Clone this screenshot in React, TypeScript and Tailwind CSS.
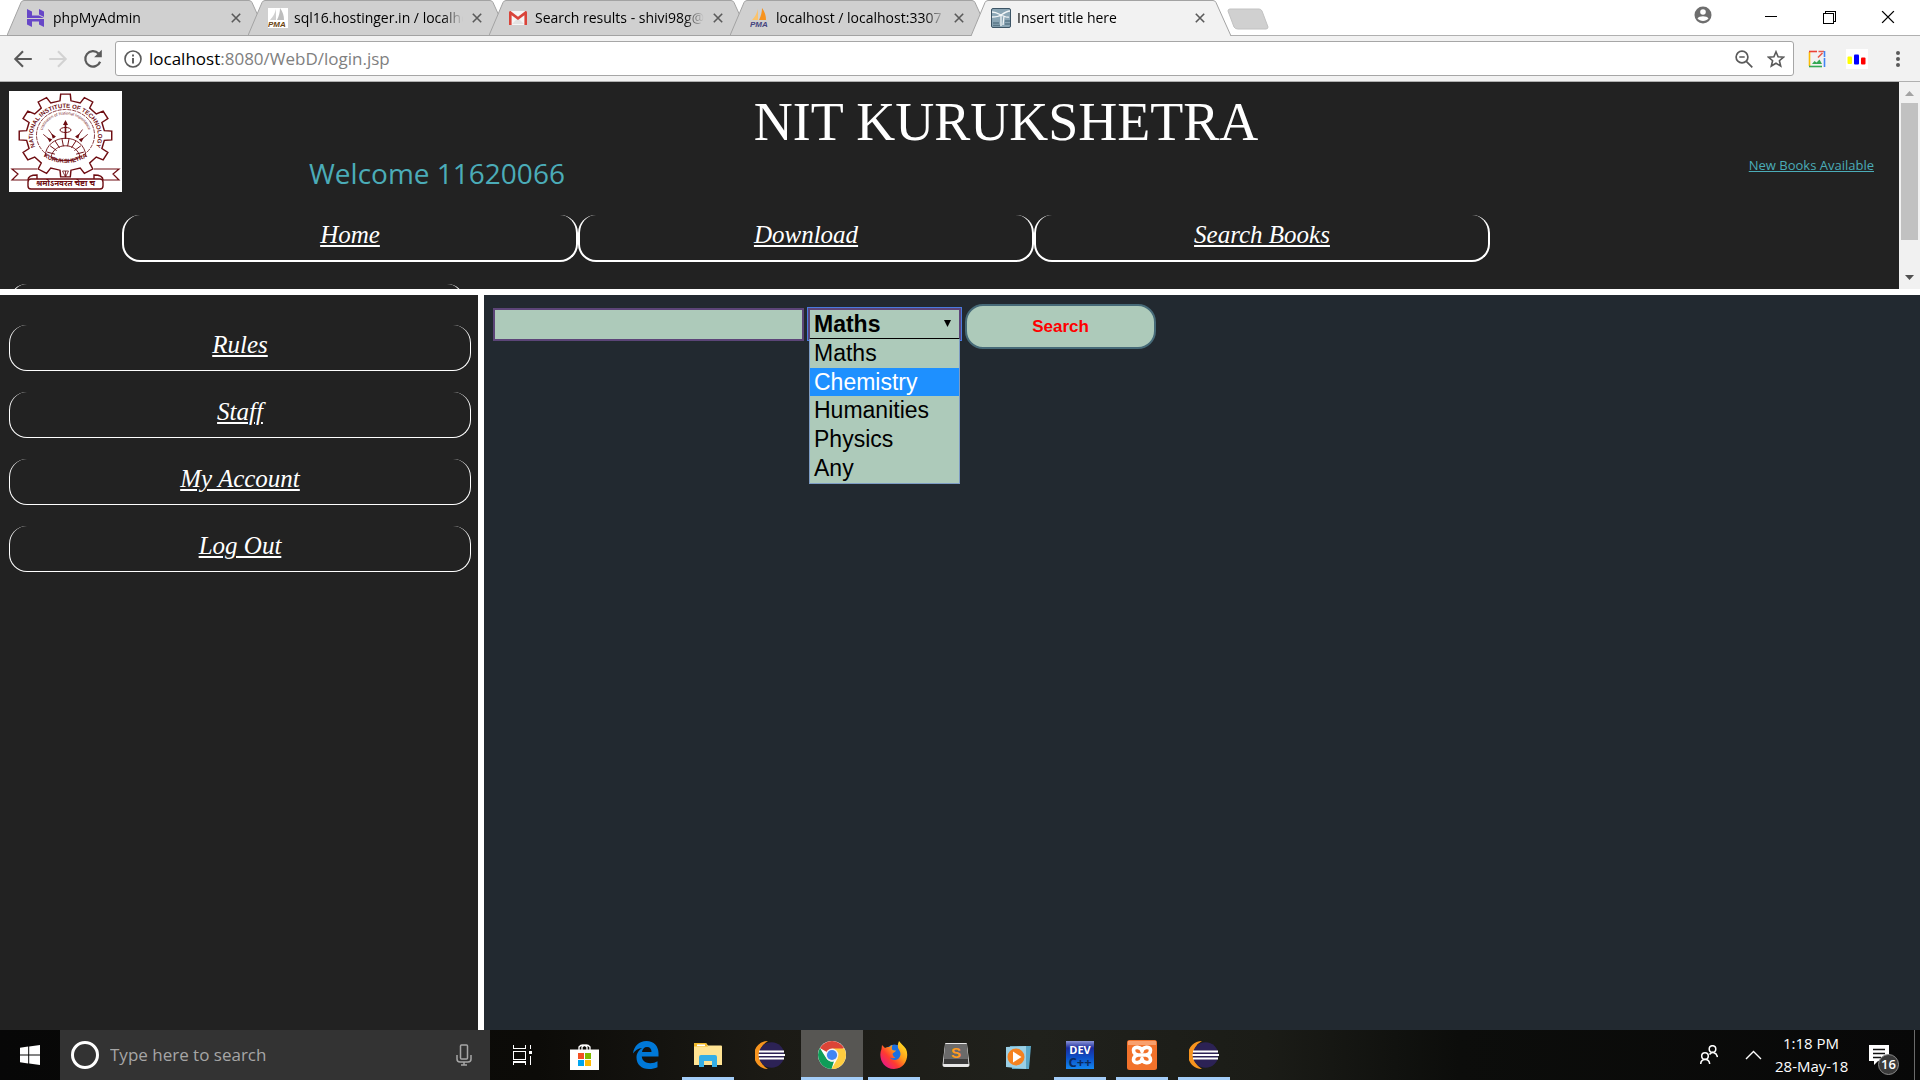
import type { ReactNode } from "react";

const UI = "font-[family-name:'Segoe_UI','Open_Sans',sans-serif]";
const COMIC = "font-[family-name:'Comic_Sans_MS','Open_Sans',sans-serif]";
const CORSIVA = "font-[family-name:'Monotype_Corsiva','Liberation_Serif',serif] italic";

/* ---------- browser chrome ---------- */

function HostingerIcon() {
  return (
    <svg viewBox="0 0 18 18" className="size-[18px]" fill="#6747c7">
      <path d="M0 0l5 2.600v3.800h7L17 9H0zM12 0l5 2.600V8l-5-2.400zM0 10h17v8l-5-2.600V12.600H5l0 0V18l-5-2.600z" />
    </svg>
  );
}

function PmaIcon({ gray }: { gray?: boolean }) {
  return (
    <svg viewBox="0 0 20 20" className="size-5">
      {gray && <rect width="20" height="20" fill="#fff" />}
      <path d="M8 1v11H2C5 9 7 5 8 1z" fill={gray ? "#d0d0d0" : "#fbc36b"} />
      <path d="M12 0c3 4 4 8 4 12H9c2-4 3-8 3-12z" fill={gray ? "#bdbdbd" : "#f7931e"} />
      <text x="0" y="19" fontSize="8" fontWeight="700" fontStyle="italic" fontFamily="Liberation Sans" fill={gray ? "#6b4510" : "#45457e"}>
        PMA
      </text>
    </svg>
  );
}

function GmailIcon() {
  return (
    <svg viewBox="0 0 18 14" className="h-3.5 w-[18px]">
      <path d="M2 0h14v14H2z" fill="#f5f5f5" />
      <path d="M3 13l6-6 6 6z" fill="#e2e2e2" />
      <path d="M0 1.500C0 .6.6 0 1.500 0L9 5.800 16.500 0c.9 0 1.500.6 1.500 1.500V14h-2.600V4.200L9 9 2.600 4.200V14H0z" fill="#d9443a" />
    </svg>
  );
}

function TomcatIcon() {
  return (
    <svg viewBox="0 0 20 20" className="size-5">
      <rect x=".5" y=".5" width="19" height="19" rx="1.500" fill="#8ba6b5" stroke="#3d5566" />
      <path d="M1 4c4 0 7 2 9 3 3-2 6-4 9-4M10 7c-3 2-6 2-9 2M10 7c3 1 6 3 8 2M10 7v11M13 8l-1 9" stroke="#f2f6f8" strokeWidth="1.300" fill="none" />
      <path d="M2 15h6M2 17.500h7M14 13h5M14 16h5" stroke="#5a7788" strokeWidth="1.500" />
    </svg>
  );
}

function Cross({ className }: { className: string }) {
  return (
    <svg viewBox="0 0 10 10" className={className} stroke="currentColor" fill="none">
      <path d="M.8.8l8.400 8.400M9.200.8L.8 9.200" />
    </svg>
  );
}

function Tab({ icon, title, active }: { icon: ReactNode; title: string; active?: boolean }) {
  return (
    <div className={`relative -ml-5 flex h-9 w-[261px] flex-none items-center pr-6 pl-5 first:ml-0 ${active ? "z-10" : ""}`}>
      <svg viewBox="0 0 261 36" preserveAspectRatio="none" className="absolute inset-0 h-full w-full" fill={active ? "#f2f2f2" : "#d0d0d0"} stroke="#a3a3a3">
        <path d={active ? "M0 36L14 2.500Q15 .5 17 .5H242Q244 .5 245 2.500L260 36" : "M0 35.500L14 2.500Q15 .5 17 .5H242Q244 .5 245 2.500L260 35.500Z"} />
      </svg>
      <span className="relative flex w-[26px] flex-none items-center">{icon}</span>
      <span className="relative min-w-0 flex-1 overflow-hidden text-[14px] leading-5 whitespace-nowrap text-black [mask-image:linear-gradient(to_right,#000_88%,transparent)]">
        {title}
      </span>
      <button aria-label={`Close ${title}`} className="relative ml-1.5 flex size-4 items-center justify-center text-[#5a5a5a]">
        <Cross className="size-2.5 stroke-[1.600]" />
      </button>
    </div>
  );
}

function TabStrip() {
  return (
    <div className="flex h-9 flex-none items-stretch border-b border-[#b0b0b0] bg-white pl-[7px]">
      <div className="-mb-px flex">
        <Tab icon={<HostingerIcon />} title="phpMyAdmin" />
        <Tab icon={<PmaIcon gray />} title="sql16.hostinger.in / localhost" />
        <Tab icon={<GmailIcon />} title="Search results - shivi98g@gmail.com" />
        <Tab icon={<PmaIcon />} title="localhost / localhost:3307" />
        <Tab icon={<TomcatIcon />} title="Insert title here" active />
      </div>
      <button aria-label="New tab" className="mt-2 -ml-1.5 h-[22px] w-11">
        <svg viewBox="0 0 44 22" className="h-full w-full">
          <path d="M4 1h29q2 0 3 2l6 16q0 2-2 2H12q-3 0-4-2L2 3q0-2 2-2z" fill="#d0d0d0" stroke="#c2c2c2" />
        </svg>
      </button>
      <div className="ml-auto flex items-start pr-0.5">
        <button aria-label="Profile" className="mt-1.5 mr-[30px] text-[#6e6e6e]">
          <svg viewBox="0 0 18 18" className="size-[18px]">
            <circle cx="9" cy="9" r="8.500" fill="currentColor" />
            <circle cx="9" cy="6" r="2.800" fill="#fff" />
            <path d="M3.500 12.500c1.500-3 9.500-3 11 0-2.500 3.300-8.500 3.300-11 0z" fill="#fff" />
          </svg>
        </button>
        <button aria-label="Minimize" className="flex h-8 w-[58px] items-center justify-center">
          <span className="h-px w-3 bg-black" />
        </button>
        <button aria-label="Restore" className="flex h-[34px] w-[58px] items-center justify-center">
          <svg viewBox="0 0 13 13" className="size-[13px]" fill="none" stroke="#000" shapeRendering="crispEdges">
            <path d="M.5 2.500h10v10H.5zM2.500 2.500v-2h10v10h-2" />
          </svg>
        </button>
        <button aria-label="Close window" className="flex h-[34px] w-[60px] items-center justify-center">
          <Cross className="size-3.5" />
        </button>
      </div>
    </div>
  );
}

function Toolbar() {
  return (
    <div className="flex h-[46px] flex-none items-center border-b border-[#b0b0b0] bg-[#f2f2f2] pr-3 pl-3">
      <button aria-label="Back" className="w-[35px]">
        <svg viewBox="0 0 20 20" className="size-[22px]" fill="none" stroke="#5a5a5a" strokeWidth="1.900">
          <path d="M18 10H3M10 3l-7 7 7 7" />
        </svg>
      </button>
      <button aria-label="Forward" className="w-[35px]">
        <svg viewBox="0 0 20 20" className="size-[22px]" fill="none" stroke="#d2d2d2" strokeWidth="1.900">
          <path d="M2 10h15M10 3l7 7-7 7" />
        </svg>
      </button>
      <button aria-label="Reload" className="w-[33px]">
        <svg viewBox="0 0 20 20" className="size-[22px]">
          <path d="M16.500 12.500A7 7 0 1 1 15 5" fill="none" stroke="#5a5a5a" strokeWidth="2" />
          <path d="M18 1.500v7h-7z" fill="#5a5a5a" />
        </svg>
      </button>
      <div className="flex h-[35px] min-w-0 flex-1 items-center rounded-[3px] border border-[#a6a6a6] bg-white px-2">
        <svg viewBox="0 0 18 18" className="mr-[7px] size-[18px] flex-none" fill="none" stroke="#5a5a5a" strokeWidth="1.600">
          <circle cx="9" cy="9" r="8" />
          <path d="M9 8v5.500M9 4.500v2" strokeWidth="1.900" />
        </svg>
        <div className="flex-1 text-[17px] leading-6 text-[#808080]">
          <span className="text-black">localhost</span>:8080/WebD/login.jsp
        </div>
        <button aria-label="Zoom" className="mr-3.5">
          <svg viewBox="0 0 18 18" className="size-[18px]" fill="none" stroke="#5a5a5a" strokeWidth="1.700">
            <circle cx="7" cy="7" r="5.900" />
            <path d="M4.300 7h5.400M11.300 11.300l6 6" />
          </svg>
        </button>
        <button aria-label="Bookmark this page">
          <svg viewBox="0 0 18 18" className="size-[18px]" fill="none" stroke="#5a5a5a" strokeWidth="1.600">
            <path d="M9 1.800l2.100 5 5.400.4-4.100 3.500 1.300 5.300L9 13.200 4.300 16l1.300-5.300-4.100-3.500 5.400-.4z" />
          </svg>
        </button>
      </div>
      <button aria-label="Image extension" className="ml-3.5">
        <svg viewBox="0 0 18 18" className="size-[18px]" fill="none" strokeWidth="1.600">
          <path d="M1.500 2v14" stroke="#fbbc05" />
          <path d="M1 1.500h8" stroke="#ea4335" />
          <path d="M1 16.500h13" stroke="#34a853" />
          <path d="M16.500 17V8" stroke="#4285f4" />
          <path d="M10 7.500l4.500-4.500M10.500 1.500h5.500" stroke="#ea5a4b" />
          <path d="M16.500 1v6" stroke="#4285f4" />
          <path d="M4 14l2.500-3 2 1.500 3-3 2.500 4.500z" fill="#34a853" />
        </svg>
      </button>
      <button aria-label="Chart extension" className="ml-5">
        <svg viewBox="0 0 22 20" className="h-5 w-[22px]">
          <rect width="22" height="20" fill="#fff" />
          <rect x="1.500" y="7.500" width="4.500" height="7.500" rx="1" fill="#ff0" />
          <rect x="8" y="5.500" width="5" height="10" rx="1" fill="#00f" />
          <rect x="15" y="8.500" width="4.500" height="7" rx="1" fill="#f00" />
        </svg>
      </button>
      <button aria-label="Menu" className="ml-5 flex w-5 flex-col items-center gap-0.5 py-1">
        <i className="size-1 rounded-full bg-[#5a5a5a]" />
        <i className="size-1 rounded-full bg-[#5a5a5a]" />
        <i className="size-1 rounded-full bg-[#5a5a5a]" />
      </button>
    </div>
  );
}

/* ---------- page ---------- */

function gearPath(cx: number, cy: number, outer: number, inner: number, teeth: number) {
  const points: string[] = [];
  const step = (Math.PI * 2) / teeth;
  for (let i = 0; i < teeth; i++) {
    const a = i * step - Math.PI / 2;
    const corners: [number, number][] = [
      [inner, -0.27],
      [outer, -0.2],
      [outer, 0.2],
      [inner, 0.27],
    ];
    for (const [r, k] of corners) {
      points.push(`${(cx + r * Math.cos(a + k * step)).toFixed(1)} ${(cy + r * Math.sin(a + k * step)).toFixed(1)}`);
    }
  }
  return `M${points.join("L")}Z`;
}

function Crest() {
  const ink = "#6e0d12";
  const rays = [-50, -36, 36, 50];
  const blocks = [-75, -54, -33, -11, 11, 33, 54, 75];
  return (
    <svg viewBox="0 0 113 101" role="img" aria-label="NIT Kurukshetra crest" className="h-[101px] w-[113px] flex-none bg-white" fill="none" stroke={ink}>
      <path d={gearPath(56.5, 44.5, 41.5, 35, 12)} strokeWidth="1.300" transform="translate(-6.8 0) scale(1.12 1)" />
      <ellipse cx="56.500" cy="44" rx="29" ry="25.500" strokeDasharray="4 1" strokeWidth=".8" />
      <path id="crest-top" d="M28 59a32.500 28.500 0 1 1 57 0" stroke="none" />
      <path id="crest-mid" d="M33 44a23.500 20.500 0 0 1 47 0" stroke="none" />
      <path id="crest-low" d="M33 64a30 21 0 0 0 47 0" stroke="none" />
      <g fill={ink} stroke="none" fontFamily="Liberation Sans">
        <text fontSize="6" fontWeight="700">
          <textPath href="#crest-top" startOffset="50%" textAnchor="middle">NATIONAL INSTITUTE OF TECHNOLOGY</textPath>
        </text>
        <text fontSize="4">
          <textPath href="#crest-mid" startOffset="50%" textAnchor="middle">Institution of National Importance</textPath>
        </text>
        <text fontSize="6" fontWeight="700">
          <textPath href="#crest-low" startOffset="50%" textAnchor="middle">KURUKSHETRA</textPath>
        </text>
      </g>
      <path d="M56.500 31v17" strokeWidth="1.600" />
      <path d="M54 34l2.500-5 2.500 5z" fill={ink} stroke="none" />
      <ellipse cx="56.500" cy="39" rx="5.500" ry="2.500" />
      {rays.map((a) => (
        <g key={a} transform={`rotate(${a} 56.500 62)`}>
          <path d="M56.500 43V33" strokeWidth=".8" />
          <path d="M54.500 43l2-5 2 5z" fill={ink} stroke="none" />
        </g>
      ))}
      <path d="M36 66c1-25 40-25 41 0" strokeWidth=".9" />
      <path d="M42 66c3-15 26-15 29 0-6 5-23 5-29 0z" strokeWidth=".9" />
      {blocks.map((a) => (
        <path key={a} d="M56.500 47v8" transform={`rotate(${a} 56.500 66)`} strokeWidth=".9" />
      ))}
      <path d="M53.500 80h6l-3 6zM56.500 80v6" strokeWidth=".8" />
      <path d="M28 78H3l6 5-6 6h16M85 78h25l-6 5 6 6H94" strokeWidth="1.200" />
      <rect x="19" y="88" width="75" height="10" rx="3" strokeWidth="1.400" fill="#fff" />
      <path d="M19 89c0-4 3-5 9-5v4M94 89c0-4-3-5-9-5v4" strokeWidth="1.400" />
      <text x="56.500" y="95" fontSize="8" fontWeight="700" textAnchor="middle" fill={ink} stroke="none" fontFamily="Noto Sans Devanagari, Noto Sans">
        श्रमोऽनवरत चेष्टा च
      </text>
    </svg>
  );
}

const headerBox = "h-[47px] w-[456px] flex-none rounded-[18px] border-2 border-t-0 border-white text-center";

function HeaderLink({ children }: { children: string }) {
  return (
    <li className={headerBox}>
      <a href="#" className={`${CORSIVA} text-[25px] leading-10 text-white underline decoration-2 underline-offset-2`}>
        {children}
      </a>
    </li>
  );
}

function HeaderFrame() {
  return (
    <div className="flex h-[207px] flex-none bg-[#222222]">
      <header className="min-w-0 flex-1 overflow-hidden p-[9px]">
        <div className="flex">
          <Crest />
          <div className="min-w-0 flex-1">
            <h1 className="text-center font-[family-name:'Liberation_Serif',serif] text-[54px] leading-[62px] text-white">NIT KURUKSHETRA</h1>
            <div className="flex h-[62px] justify-between pr-4 pl-[187px]">
              <p className={`${COMIC} text-[28px] leading-[40px] text-[#4bacb8]`}>Welcome 11620066</p>
              <a href="#" className={`${COMIC} text-[13px] leading-6 text-[#4bacb8] underline underline-offset-1`}>
                New Books Available
              </a>
            </div>
            <ul className="flex">
              <HeaderLink>Home</HeaderLink>
              <HeaderLink>Download</HeaderLink>
              <HeaderLink>Search Books</HeaderLink>
            </ul>
          </div>
        </div>
        <div className="mt-[22px]">
          <div className={headerBox} />
        </div>
      </header>
      <div className="flex w-[21px] flex-none flex-col items-center bg-[#f1f1f1]">
        <svg viewBox="0 0 9 5" className="mx-auto mt-[9px] mb-[7px] h-[5px] w-[9px]" fill="#a3a3a3">
          <path d="M4.500 0L9 5H0z" />
        </svg>
        <div className="h-[137px] w-[17px] bg-[#c1c1c1]" />
        <svg viewBox="0 0 9 5" className="mx-auto mt-auto mb-[9px] h-[5px] w-[9px]" fill="#505050">
          <path d="M0 0h9L4.500 5z" />
        </svg>
      </div>
    </div>
  );
}

function Sidebar() {
  return (
    <nav className="w-[478px] flex-none bg-[#222222] pt-[30px] pr-[7px] pl-[9px]">
      <ul className="flex flex-col gap-[21px]">
        {["Rules", "Staff", "My Account", "Log Out"].map((label) => (
          <li key={label} className="h-[46px] rounded-[18px] border border-t-0 border-white text-center">
            <a href="#" className={`${CORSIVA} text-[25px] leading-10 text-white underline decoration-2 underline-offset-2`}>
              {label}
            </a>
          </li>
        ))}
      </ul>
    </nav>
  );
}

function SearchFrame() {
  const options = ["Maths", "Chemistry", "Humanities", "Physics", "Any"];
  return (
    <main className="min-w-0 flex-1 bg-[#222930] p-[9px] font-[family-name:'Liberation_Sans',sans-serif]">
      <form className="flex items-start" onSubmit={(e) => e.preventDefault()}>
        <input aria-label="Book title" className="mt-1 h-[33px] w-[311px] border-2 border-[#5c4578] bg-[#adcaba] px-1 text-[23px] outline-none" />
        <div className="relative mt-1 ml-1 w-[153px]">
          <select
            aria-label="Subject"
            defaultValue="Maths"
            className="h-8 w-full appearance-none border-2 border-[#5c4578] bg-[#adcaba] pl-1 text-[23px] leading-7 font-bold text-black outline-1 outline-[#4a7ae0]"
          >
            {options.map((o) => (
              <option key={o}>{o}</option>
            ))}
          </select>
          <svg viewBox="0 0 7 7" className="pointer-events-none absolute top-3 right-2.5 size-[7px]">
            <path d="M0 0h7L3.500 7z" />
          </svg>
          <ul role="listbox" aria-label="Subject options" className="absolute inset-x-px top-[30px] z-10 border border-[#7d9cc4] border-t-black bg-[#adcaba] text-[23px]">
            {options.map((o) => (
              <li
                key={o}
                role="option"
                aria-selected={o === "Chemistry"}
                className={o === "Chemistry" ? "h-7 bg-[#1e90ff] pl-1 leading-7 text-white" : "h-[29px] pl-1 leading-7 text-black"}
              >
                {o}
              </li>
            ))}
          </ul>
        </div>
        <button className="ml-1 h-[45px] w-[191px] rounded-[18px] border-2 border-[#466a78] bg-[#adcaba] text-[17px] font-bold text-[#ff0000]">Search</button>
      </form>
    </main>
  );
}

/* ---------- taskbar ---------- */

function Eclipse() {
  return (
    <svg viewBox="0 0 30 28" className="h-7 w-[30px]">
      <path d="M13 0A14 14 0 0 0 13 28 16 16 0 0 1 13 0z" fill="#f7941e" />
      <circle cx="16.500" cy="14" r="12.800" fill="#2c2255" />
      <path d="M4 10.500h25M3.500 14h26.500M4 17.500h25" stroke="#fff" strokeWidth="1.900" />
    </svg>
  );
}

const APPS: { name: string; state?: "open" | "active"; icon: ReactNode }[] = [
  {
    name: "Task View",
    icon: (
      <svg viewBox="0 0 19 20" className="h-5 w-[19px]" fill="none" stroke="#fff" strokeWidth="1.200" shapeRendering="crispEdges">
        <path d="M.5 0v3.500h12V0M.5 6.500h12v8H.5zM.5 20v-3h12v3M17.500 0v4M17.500 11v9" />
        <path d="M16 6h3v3h-3z" fill="#fff" stroke="none" />
      </svg>
    ),
  },
  {
    name: "Store",
    icon: (
      <svg viewBox="0 0 29 29" className="size-[29px]">
        <path d="M9 9V6a5 5 0 0 1 8 0v3M12 9V6a5 5 0 0 1 8 0v3" fill="none" stroke="#fff" strokeWidth="1.300" />
        <path d="M0 8.500h29V29H0z" fill="#fff" />
        <path d="M8 12h6v6H8z" fill="#f25022" />
        <path d="M15 12h6v6h-6z" fill="#7fba00" />
        <path d="M8 19h6v6H8z" fill="#00a4ef" />
        <path d="M15 19h6v6h-6z" fill="#ffb900" />
      </svg>
    ),
  },
  {
    name: "Edge",
    icon: (
      <svg viewBox="0 0 26 28" className="h-7 w-[26px]" fill="#0078d7">
        <path d="M0 12.500C1 5 6 0 13.500 0 21 0 25.500 5.500 25.500 12v3.500H8.800c.3 4.500 4 6.700 8.400 6.700 3 0 5.300-.8 7.300-2v6c-2.500 1.200-5.300 1.800-8.700 1.800C8.500 28 3.500 23.300 3.500 16.500c0-4.200 2.300-7.600 5.800-9.500C5 7.300 2 9.500 0 12.500zM9 11h9.500c0-3-1.300-5-4.500-5-2.800 0-4.600 2-5 5z" />
      </svg>
    ),
  },
  {
    name: "File Explorer",
    state: "open",
    icon: (
      <svg viewBox="0 0 28 24" className="h-6 w-7">
        <path d="M0 1q0-1 1-1h11l2 2.500h13q1 0 1 1V22H0z" fill="#ffe393" />
        <path d="M0 1q0-1 1-1h11l2 3.500H0z" fill="#f2b928" />
        <path d="M3 1.500h8v1.600H3z" fill="#fff" />
        <path d="M5 24V14q0-2 2-2h14q2 0 2 2v10h-5v-6h-8v6z" fill="#35aee6" />
      </svg>
    ),
  },
  { name: "Eclipse", icon: <Eclipse /> },
  {
    name: "Chrome",
    state: "active",
    icon: (
      <svg viewBox="0 0 28 28" className="size-7">
        <circle cx="14" cy="14" r="14" fill="#fff" />
        <path d="M14 14L1.900 7A14 14 0 0 1 26.100 7z" fill="#db4437" />
        <path d="M14 7.500h12.400A14 14 0 0 1 13.500 28l6.100-10.800z" fill="#ffcd40" />
        <path d="M1.900 7l6.500 10.500c1.500 2.500 4.200 3.500 7.500 3L13.500 28A14 14 0 0 1 1.900 7z" fill="#0f9d58" />
        <circle cx="14" cy="14" r="6.400" fill="#f1f1f1" />
        <circle cx="14" cy="14" r="5.100" fill="#4285f4" />
      </svg>
    ),
  },
  {
    name: "Firefox",
    state: "open",
    icon: (
      <svg viewBox="0 0 28 28" className="size-7">
        <defs>
          <linearGradient id="fox" x1="1" y1="0" x2="0.100" y2="0.900">
            <stop offset="0.100" stopColor="#ffe226" />
            <stop offset="0.450" stopColor="#ff9a1a" />
            <stop offset="0.700" stopColor="#ff3b30" />
            <stop offset="1" stopColor="#e5158d" />
          </linearGradient>
        </defs>
        <circle cx="14.500" cy="13.500" r="10" fill="#1b6fe0" />
        <path d="M2 4l3 3c1.500-1 3-1.200 4.500-1 0 0 1-1.500 3-2-1 2-1 3.500 0 5 1 .5 2.500.5 3.500.5-.5 1.500-3 2-3.500 3.500.5 1.500 1 3 3 3.500-1.500 1-4 1-5.500 0 1.500 3 6.500 3.500 9 .5 2.500-3 1.500-6.500-.5-9-1-2-1-5 .5-8 1.500 2.500 5 4.500 7 8 3.500 7.500-.5 20-12 20S-2 16 1.500 8z" fill="url(#fox)" />
      </svg>
    ),
  },
  {
    name: "Sublime Text",
    icon: (
      <svg viewBox="0 0 28 25" className="h-[25px] w-7">
        <path d="M3 1q0-1 1-1h20q1 0 1 1l2.500 21q0 2-2 2h-23q-2 0-2-2z" fill="#e8e8e8" />
        <path d="M3.500 1h21l2 20h-25z" fill="#3a3a3a" />
        <path d="M3.500 1h21l1.500 15H2z" fill="#6a6a6a" />
        <text x="14" y="14.500" textAnchor="middle" fontSize="15" fontWeight="700" fontFamily="Liberation Sans" fill="#ff9b20">S</text>
      </svg>
    ),
  },
  {
    name: "Media Player",
    icon: (
      <svg viewBox="0 0 25 25" className="mt-1 size-[25px]">
        <path d="M4 1l21 0-2 23H6z" fill="#5ba7c7" />
        <path d="M0 2l20-1v23L0 22z" fill="#9bd0e6" />
        <circle cx="10" cy="12" r="8.500" fill="#f58220" />
        <path d="M7 6.500l8.500 5.500L7 17.500z" fill="#fff" />
      </svg>
    ),
  },
  {
    name: "Dev-C++",
    state: "open",
    icon: (
      <svg viewBox="0 0 28 28" className="size-7">
        <defs>
          <linearGradient id="dev" x1="0" y1="0" x2="0" y2="1">
            <stop stopColor="#8a94d8" />
            <stop offset="0.250" stopColor="#1c2c9c" />
            <stop offset="0.600" stopColor="#0c50c8" />
            <stop offset="1" stopColor="#1487f0" />
          </linearGradient>
        </defs>
        <rect width="28" height="28" fill="url(#dev)" />
        <text x="14" y="13" textAnchor="middle" fontSize="11" fontWeight="700" fontFamily="Open Sans" fill="#fff">DEV</text>
        <text x="14" y="26" textAnchor="middle" fontSize="13" fontWeight="700" fontFamily="Open Sans" fill="#0b2a5e">C++</text>
      </svg>
    ),
  },
  {
    name: "XAMPP",
    state: "open",
    icon: (
      <svg viewBox="0 0 30 30" className="size-[30px]">
        <rect width="30" height="30" rx="2.500" fill="#f2722b" />
        <path d="M1 1h28v4H1z" fill="#f9a06d" />
        <path
          d="M15 11.500c0-5-8.500-5.500-8.500-1.500 0 2.500 1.500 4.500 4.500 5-3 .5-4.500 2.500-4.500 5 0 4 8.500 3.500 8.500-1.500M15 11.500c0-5 8.500-5.500 8.500-1.500 0 2.500-1.500 4.500-4.500 5 3 .5 4.500 2.500 4.500 5 0 4-8.500 3.500-8.500-1.500M11 15h8"
          fill="none"
          stroke="#fff"
          strokeWidth="3.600"
          strokeLinecap="round"
        />
      </svg>
    ),
  },
  { name: "Eclipse workspace", state: "open", icon: <Eclipse /> },
];

function Taskbar() {
  return (
    <footer className="flex h-[50px] flex-none items-stretch bg-[linear-gradient(to_right,#070707_0%,#0c0b08_28%,#1b1a15_40%,#20211c_54%,#1b1c17_66%,#0c0d0b_76%,#080808_100%)] text-white">
      <button aria-label="Start" className="flex w-[60px] items-center justify-center">
        <svg viewBox="0 0 20 20" className="size-5" fill="#fff">
          <path d="M0 2.800l8.200-1.200v7.900H0zM9.200 1.400L20 0v9.500H9.200zM0 10.500h8.200v7.900L0 17.200zM9.200 10.500H20V20L9.200 18.600z" />
        </svg>
      </button>
      <label className="flex w-[430px] items-center bg-[#333333] pr-[18px] pl-[11px]">
        <span className="size-7 flex-none rounded-full border-[3px] border-white" />
        <input aria-label="Type here to search" placeholder="Type here to search" className="ml-[11px] min-w-0 flex-1 bg-transparent text-[17px] leading-6 outline-none placeholder:text-[#a6a6a6]" />
        <svg viewBox="0 0 16 22" className="h-[22px] w-4" fill="none" stroke="#a6a6a6" strokeWidth="1.500">
          <rect x="4.500" y="1" width="7" height="14" rx="1" />
          <path d="M1 11v4q0 3 3 3h8q3 0 3-3v-4M8 18v3M5 21h6" />
        </svg>
      </label>
      <div className="flex pl-px">
        {APPS.map((app) => (
          <button key={app.name} aria-label={app.name} className={`relative flex w-[62px] flex-none items-center justify-center ${app.state === "active" ? "bg-[#575653]" : ""}`}>
            {app.icon}
            {app.state && <span className={`absolute bottom-0 h-[3px] bg-[#a3cdf8] ${app.state === "active" ? "inset-x-0" : "inset-x-[5px]"}`} />}
          </button>
        ))}
      </div>
      <div className="ml-auto flex items-center">
        <button aria-label="People" className="mr-[27px]">
          <svg viewBox="0 0 18 20" className="h-5 w-[18px]" fill="none" stroke="#fff" strokeWidth="1.500">
            <circle cx="12.500" cy="4" r="3.300" />
            <path d="M9.500 9.500c2-3 7-2.500 8 2.500" />
            <circle cx="5" cy="11" r="3.300" />
            <path d="M.7 19c.3-6 8.600-6 9 0" />
          </svg>
        </button>
        <button aria-label="Show hidden icons" className="mr-[13px]">
          <svg viewBox="0 0 17 10" className="h-2.5 w-[17px]" fill="none" stroke="#fff" strokeWidth="1.400">
            <path d="M1 9l7.500-7.500L16 9" />
          </svg>
        </button>
        <div className="w-[72px] text-center text-[15px] leading-[23px] whitespace-nowrap">
          <div>1:18 PM</div>
          <div>28-May-18</div>
        </div>
        <button aria-label="16 notifications" className="relative mr-[25px] ml-[22px] h-5 w-5">
          <svg viewBox="0 0 20 20" className="size-5">
            <path d="M0 0h20v16H9l-4 4v-4H0z" fill="#fff" />
            <path d="M4 4.500h12M4 8.500h12M4 12.500h8" stroke="#111" strokeWidth="1.300" />
          </svg>
          <span className="absolute top-[9px] left-[9px] flex size-[21px] items-center justify-center rounded-full border border-[#8a8a8a] bg-[#3a3a3a] text-[13px] leading-none font-semibold">16</span>
        </button>
        <div className="h-[50px] w-1.5 border-l border-[#6b6b6b]" />
      </div>
    </footer>
  );
}

export default function App() {
  return (
    <div className={`${UI} flex h-screen flex-col overflow-hidden bg-white`}>
      <TabStrip />
      <Toolbar />
      <HeaderFrame />
      <div className="mt-1.5 flex min-h-0 flex-1 gap-1.5">
        <Sidebar />
        <SearchFrame />
      </div>
      <Taskbar />
    </div>
  );
}
